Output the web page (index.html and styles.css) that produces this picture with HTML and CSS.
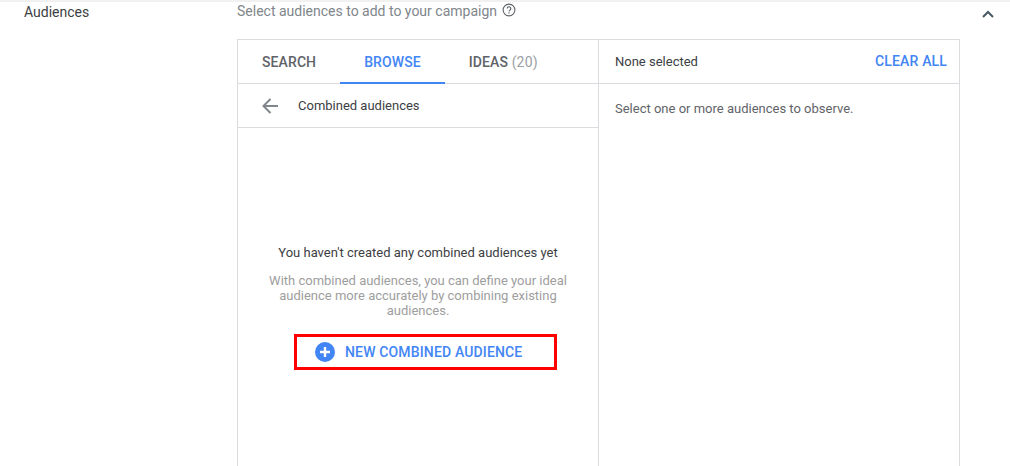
FILE: index.html
```html
<!DOCTYPE html>
<html lang="en">
<head>
<meta charset="utf-8">
<title>Audiences</title>
<link rel="stylesheet" href="styles.css">
</head>
<body>
<div class="topline"></div>
<section class="row">
  <div class="label">Audiences</div>
  <div class="main">
    <div class="prompt">Select audiences to add to your campaign
      <svg class="help" viewBox="0 0 14 14" width="14" height="14"><circle cx="7" cy="7" r="5.9" fill="none" stroke="#5f6368" stroke-width="1.1"/><path d="M5.2 5.6a1.8 1.8 0 1 1 2.9 1.4c-.6.5-1.1.8-1.1 1.6" fill="none" stroke="#5f6368" stroke-width="1.1"/><rect x="6.4" y="9.4" width="1.2" height="1.2" fill="#5f6368"/></svg>
    </div>
    <div class="panel">
      <div class="left">
        <div class="tabs">
          <div class="tab">SEARCH</div>
          <div class="tab active">BROWSE</div>
          <div class="tab">IDEAS <span class="count">(20)</span></div>
        </div>
        <div class="crumb">
          <svg class="back" viewBox="0 0 16 16" width="16" height="16"><path d="M16 8H1.5M8.5 1L1.5 8l7 7" fill="none" stroke="#80868b" stroke-width="2"/></svg>
          <span>Combined audiences</span>
        </div>
        <div class="empty">
          <div class="empty-title">You haven't created any combined audiences yet</div>
          <div class="empty-text">With combined audiences, you can define your ideal audience more accurately by combining existing audiences.</div>
          <div class="new-btn">
            <svg viewBox="0 0 20 20" width="20" height="20"><circle cx="10" cy="10" r="10" fill="#4285f4"/><path d="M10 5v10M5 10h10" stroke="#fff" stroke-width="2.4"/></svg>
            <span>NEW COMBINED AUDIENCE</span>
          </div>
        </div>
      </div>
      <div class="right">
        <div class="right-head">
          <span>None selected</span>
          <span class="clear">CLEAR ALL</span>
        </div>
        <div class="right-body">Select one or more audiences to observe.</div>
      </div>
    </div>
  </div>
  <svg class="chev" viewBox="0 0 12 8" width="12" height="8"><path d="M1 7l5-5 5 5" fill="none" stroke="#455a64" stroke-width="2"/></svg>
</section>
</body>
</html>
```
FILE: styles.css
```css
html, body {
  margin: 0;
  padding: 0;
  height: 466px;
  overflow: hidden;
  background: #fff;
  font-family: Roboto, "Liberation Sans", sans-serif;
}
.topline {
  height: 2px;
  background: #f1f1f1;
}
.row {
  display: flex;
  align-items: flex-start;
  height: 464px;
  overflow: hidden;
}
.label {
  width: 213px;
  padding: 0 0 0 24px;
  font-size: 14px;
  line-height: 20px;
  color: #3c4043;
  flex: none;
}
.main {
  width: 723px;
  flex: none;
}
.prompt {
  display: flex;
  align-items: center;
  gap: 5px;
  height: 18px;
  font-size: 14px;
  color: #80868b;
}
.help { flex: none; margin-top: -2px; }
.panel {
  display: flex;
  margin-top: 19px;
  height: 440px;
  border: 1px solid #dadce0;
  border-bottom: 0;
  box-sizing: border-box;
  width: 723px;
}
.left {
  width: 360px;
  flex: none;
  border-right: 1px solid #dadce0;
  display: flex;
  flex-direction: column;
}
.tabs {
  display: flex;
  height: 44px;
  box-sizing: border-box;
  border-bottom: 1px solid #dadce0;
}
.tab {
  padding: 0 24px;
  line-height: 45px;
  height: 44px;
  box-sizing: border-box;
  font-size: 14px;
  font-weight: 500;
  color: #5f6368;
  letter-spacing: 0.1px;
}
.tab.active {
  color: #4285f4;
  border-bottom: 2px solid #4285f4;
}
.count {
  font-weight: 400;
  color: #9aa0a6;
  letter-spacing: 0.2px;
}
.crumb {
  display: flex;
  align-items: center;
  gap: 20px;
  height: 44px;
  box-sizing: border-box;
  border-bottom: 1px solid #dadce0;
  padding-left: 24px;
  font-size: 13px;
  color: #3c4043;
}
.empty {
  display: flex;
  flex-direction: column;
  align-items: center;
  padding-top: 116px;
}
.empty-title {
  font-size: 13px;
  line-height: 18px;
  color: #3c4043;
}
.empty-text {
  width: 310px;
  margin-top: 11px;
  text-align: center;
  font-size: 13px;
  line-height: 15px;
  color: #9e9e9e;
}
.new-btn {
  display: flex;
  align-items: center;
  gap: 10px;
  align-self: flex-start;
  width: 263px;
  height: 36px;
  box-sizing: border-box;
  border: 3px solid #f00;
  margin: 16px 0 0 56px;
  padding-left: 18px;
  font-size: 14px;
  font-weight: 500;
  letter-spacing: 0.15px;
  color: #4285f4;
}
.right {
  flex: 1;
}
.right-head {
  display: flex;
  align-items: center;
  justify-content: space-between;
  height: 44px;
  box-sizing: border-box;
  border-bottom: 1px solid #dadce0;
  padding: 0 12px 1px 16px;
  font-size: 13px;
  color: #3c4043;
}
.clear {
  font-size: 14px;
  font-weight: 500;
  letter-spacing: 0.15px;
  color: #4285f4;
}
.right-body {
  padding: 16px 16px 0;
  font-size: 13px;
  line-height: 18px;
  color: #5f6368;
}
.chev {
  flex: none;
  margin: 8px 0 0 22px;
}
```
